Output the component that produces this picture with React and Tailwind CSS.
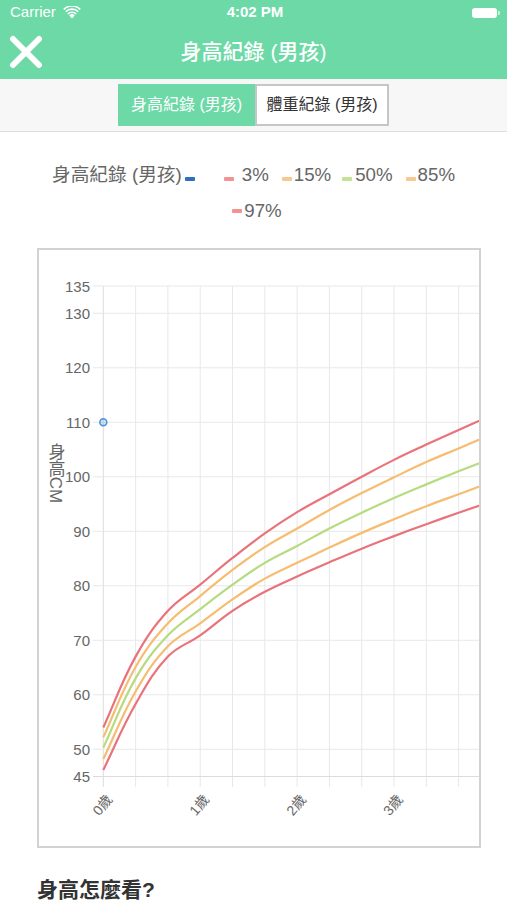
import React from "react";

// Boys length/height percentiles every 4 months (0..48): [P3, P15, P50, P85, P97]
const DATA = [
  [46.2, 48.2, 50.3, 52.2, 54.0],
  [58.3, 60.6, 63.0, 65.1, 67.0],
  [67.0, 68.9, 70.9, 73.1, 75.4],
  [70.9, 73.1, 75.7, 78.1, 80.2],
  [75.4, 77.5, 80.2, 82.9, 85.1],
  [78.9, 81.3, 84.2, 87.1, 89.6],
  [81.7, 84.2, 87.3, 90.5, 93.5],
  [84.3, 87.0, 90.5, 93.9, 96.8],
  [86.8, 89.7, 93.4, 97.0, 100.0],
  [89.1, 92.2, 96.1, 99.9, 103.1],
  [91.3, 94.6, 98.6, 102.7, 105.9],
  [93.4, 96.8, 101.0, 105.2, 108.6],
  [95.4, 99.0, 103.3, 107.7, 111.2],
];

const LINE_COLORS = ["#e9737b", "#f6bd70", "#b6db80", "#f6bd70", "#e9737b"];

// plot geometry (page coordinates)
const X0 = 103.3;
const STEP = 32.3; // px per category (4 months)
const Y_TOP = 286;
const PX_PER_CM = 5.45;
const xOf = (i) => X0 + i * STEP;
const yOf = (v) => Y_TOP + (135 - v) * PX_PER_CM;

// Bezier path through the points, same spline as a tension-0.4 line chart
function splinePath(pts, t = 0.4) {
  const cps = pts.map((cur, i) => {
    const prev = pts[i - 1] || cur;
    const next = pts[i + 1] || cur;
    const d01 = Math.hypot(cur[0] - prev[0], cur[1] - prev[1]);
    const d12 = Math.hypot(next[0] - cur[0], next[1] - cur[1]);
    const sum = d01 + d12 || 1;
    const fa = (t * d01) / sum;
    const fb = (t * d12) / sum;
    return {
      prev: [cur[0] - fa * (next[0] - prev[0]), cur[1] - fa * (next[1] - prev[1])],
      next: [cur[0] + fb * (next[0] - prev[0]), cur[1] + fb * (next[1] - prev[1])],
    };
  });
  let d = `M${pts[0][0].toFixed(2)},${pts[0][1].toFixed(2)}`;
  for (let i = 1; i < pts.length; i++) {
    const a = cps[i - 1].next;
    const b = cps[i].prev;
    d += ` C${a[0].toFixed(2)},${a[1].toFixed(2)} ${b[0].toFixed(2)},${b[1].toFixed(2)} ${pts[i][0].toFixed(2)},${pts[i][1].toFixed(2)}`;
  }
  return d;
}

const Y_TICKS = [135, 130, 120, 110, 100, 90, 80, 70, 60, 50, 45];
const X_LABELS = ["0歲", "1歲", "2歲", "3歲", "4歲"];

function GrowthChart() {
  const verticals = [];
  for (let k = 0; k < 13; k++) verticals.push(X0 + k * STEP);
  return (
    <svg width="440" height="596" className="block">
      <g transform="translate(-39,-250)" fontFamily="'Liberation Sans', 'Noto Sans CJK TC', sans-serif">
        {/* grid */}
        {verticals.map((x, i) => (
          <line key={"v" + i} x1={x} x2={x} y1={Y_TOP} y2={787} stroke={i === 0 ? "#dcdcdc" : "#e8e8e8"} strokeWidth="1" />
        ))}
        {Y_TICKS.map((v) => (
          <line key={"h" + v} x1={93} x2={500} y1={yOf(v)} y2={yOf(v)} stroke={v === 45 ? "#dcdcdc" : "#e8e8e8"} strokeWidth="1" />
        ))}
        {/* y labels */}
        {Y_TICKS.map((v) => (
          <text key={"t" + v} x={90} y={yOf(v)} textAnchor="end" dominantBaseline="central" fontSize="15" fill="#666">
            {v}
          </text>
        ))}
        {/* y axis title */}
        <text x={55} y={473} textAnchor="middle" fontSize="17" fill="#666" style={{ writingMode: "vertical-rl" }}>
          身高CM
        </text>
        {/* x labels */}
        {X_LABELS.map((l, i) => (
          <text
            key={l}
            transform={`translate(${X0 + i * 3 * STEP - 1},805) rotate(-50)`}
            textAnchor="middle"
            dominantBaseline="central"
            fontSize="14"
            fill="#666"
          >
            {l}
          </text>
        ))}
        {/* percentile curves */}
        {[0, 1, 2, 3, 4].map((p) => (
          <path
            key={"c" + p}
            d={splinePath(DATA.map((row, i) => [xOf(i), yOf(row[p])]))}
            fill="none"
            stroke={LINE_COLORS[p]}
            strokeWidth="2.2"
            strokeLinejoin="round"
          />
        ))}
        {/* recorded point */}
        <circle cx={X0} cy={yOf(110)} r="3.5" fill="rgba(74,144,217,0.25)" stroke="#4a90d9" strokeWidth="1.5" />
      </g>
    </svg>
  );
}

function Dash({ color }) {
  return <span className="inline-block w-[10px] h-[4px] rounded-[1px]" style={{ backgroundColor: color }} />;
}

export default function App() {
  return (
    <div className="w-[507px] h-[900px] overflow-hidden bg-white font-['Liberation_Sans','Noto_Sans_CJK_TC',sans-serif]">
      {/* status bar */}
      <div className="h-[25px] bg-[#6cd9a7] grid grid-cols-[1fr_auto_1fr] items-center pl-[10px] pr-[7px] text-white text-[15px]">
        <div className="flex items-center">
          <span>Carrier</span>
          <svg width="18" height="13" viewBox="0 0 18 13" className="ml-[7px]">
            <path d="M9 12.5 L6.2 9.3 A4 4 0 0 1 11.8 9.3 Z" fill="white" />
            <path d="M4.3 7.3 A6.8 6.8 0 0 1 13.7 7.3 L12.6 8.5 A5.2 5.2 0 0 0 5.4 8.5 Z" fill="white" />
            <path d="M2.2 5.0 A9.8 9.8 0 0 1 15.8 5.0 L14.7 6.2 A8.2 8.2 0 0 0 3.3 6.2 Z" fill="white" />
            <path d="M0.2 2.8 A12.6 12.6 0 0 1 17.8 2.8 L16.7 4.0 A11 11 0 0 0 1.3 4.0 Z" fill="white" />
          </svg>
        </div>
        <span className="font-semibold">4:02 PM</span>
        <div className="flex items-center justify-end">
          <div className="w-[25px] h-[10px] rounded-[3px] bg-white" />
          <div className="w-[2px] h-[4px] bg-white/60 rounded-r-[1px] ml-[1px]" />
        </div>
      </div>
      {/* navigation bar */}
      <div className="h-[54px] bg-[#6cd9a7] grid grid-cols-[52px_1fr_52px] items-center">
        <svg width="34" height="34" viewBox="0 0 34 34" className="ml-[9px]">
          <path d="M4 4 L30 30 M30 4 L4 30" stroke="white" strokeWidth="6" strokeLinecap="round" />
        </svg>
        <div className="text-center text-white text-[21px] font-medium">身高紀錄 (男孩)</div>
        <div />
      </div>
      {/* segmented control */}
      <div className="h-[53px] bg-[#f7f7f7] border-b border-[#dedede] flex items-center justify-center">
        <div className="flex h-[42px]">
          <div className="w-[137px] bg-[#6cd9a7] text-white text-[16px] flex items-center justify-center">身高紀錄 (男孩)</div>
          <div className="w-[134px] bg-white border-2 border-[#c6c6c6] text-[#333] text-[16px] flex items-center justify-center">體重紀錄 (男孩)</div>
        </div>
      </div>
      {/* legend */}
      <div className="pt-[25px] text-[18.7px] text-[#666]">
        <div className="h-[36px] flex items-center justify-center">
          <span>身高紀錄 (男孩)</span>
          <span className="ml-[3px]"><Dash color="#2f6fc0" /></span>
          <span className="ml-[29px]"><Dash color="#f29292" /></span>
          <span className="ml-[8px]">3%</span>
          <span className="ml-[13px]"><Dash color="#f8c88f" /></span>
          <span className="ml-[2px]">15%</span>
          <span className="ml-[11px]"><Dash color="#c4e196" /></span>
          <span className="ml-[3px]">50%</span>
          <span className="ml-[13px]"><Dash color="#f8c88f" /></span>
          <span className="ml-[2px]">85%</span>
        </div>
        <div className="h-[36px] flex items-center justify-center pl-[7px]">
          <Dash color="#f29292" />
          <span className="ml-[2px]">97%</span>
        </div>
      </div>
      {/* chart */}
      <div className="ml-[37px] mt-[19px] w-[444px] h-[600px] border-2 border-[#d2d2d2] overflow-hidden bg-white">
        <GrowthChart />
      </div>
      <div className="ml-[37px] mt-[28px] text-[21px] leading-[28px] font-bold text-[#333]">身高怎麼看?</div>
    </div>
  );
}
